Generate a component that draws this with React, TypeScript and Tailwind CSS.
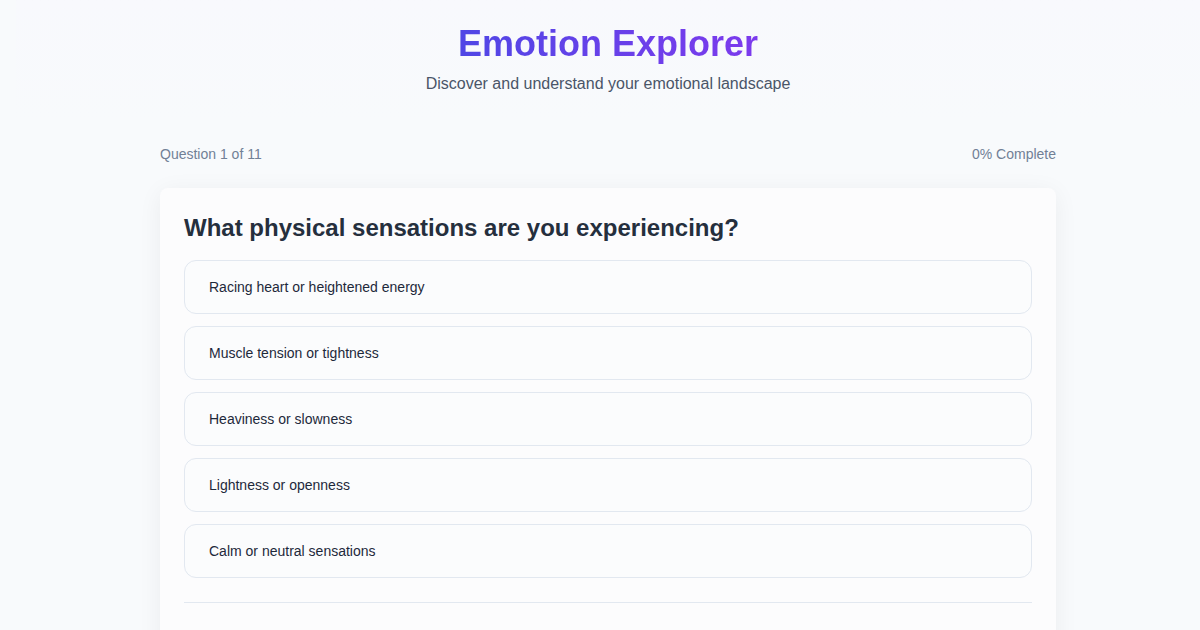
import React, { useState } from 'react';

const options = [
  'Racing heart or heightened energy',
  'Muscle tension or tightness',
  'Heaviness or slowness',
  'Lightness or openness',
  'Calm or neutral sensations',
];

export default function App() {
  const [selected, setSelected] = useState<number | null>(null);

  return (
    <div className="min-h-screen bg-[#f8fafc] pl-4 font-['Liberation_Sans',Arial,sans-serif]">
      <header className="py-6 text-center bg-linear-to-b from-[#f8f9fd] to-[#f8fafc]">
        <h1 className="inline-block text-4xl font-bold bg-linear-to-r from-[#4f46e5] to-[#7c3aed] bg-clip-text text-transparent leading-10">
          Emotion Explorer
        </h1>
        <p className="mt-2 text-base text-[#4a5568] leading-6">
          Discover and understand your emotional landscape
        </p>
      </header>

      <main className="max-w-4xl mx-auto pt-6">
        <div className="flex items-center justify-between text-sm text-[#718096] mb-6">
          <span>Question 1 of 11</span>
          <span>0% Complete</span>
        </div>

        <div className="bg-[#fcfcfd] rounded-lg shadow-[0_4px_24px_rgba(15,23,42,0.06)] p-6">
          <h2 className="text-2xl font-bold text-[#252f3d] leading-8 mb-4">
            What physical sensations are you experiencing?
          </h2>
          <div className="flex flex-col gap-3">
            {options.map((opt, i) => (
              <button
                key={i}
                onClick={() => setSelected(i)}
                className={`w-full text-left h-[54px] px-6 rounded-xl border text-sm text-[#1e293b] bg-[#fbfcfd] ${
                  selected === i ? 'border-indigo-400' : 'border-[#e2e8f0]'
                }`}
              >
                {opt}
              </button>
            ))}
          </div>
          <div className="mt-6 border-t border-[#e2e8f0] pt-6 h-20" />
        </div>
      </main>
    </div>
  );
}
